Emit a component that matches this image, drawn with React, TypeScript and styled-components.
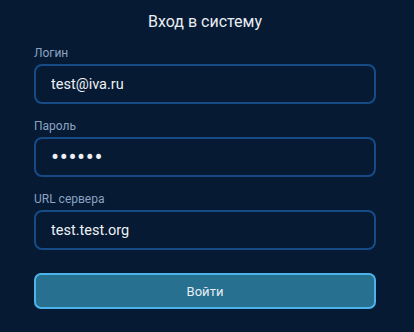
import React, { useState } from "react";
import styled, { createGlobalStyle } from "styled-components";

const GlobalStyle = createGlobalStyle`
  html, body {
    margin: 0;
    padding: 0;
    background-color: #061a33;
    font-family: Roboto, "Noto Sans", "Liberation Sans", sans-serif;
  }
`;

const Page = styled.div`
  width: 414px;
  height: 332px;
  background-color: #061a33;
  box-sizing: border-box;
  padding: 12px 38px 0 34px;
`;

const Title = styled.h1`
  margin: 0;
  font-size: 16px;
  line-height: 20px;
  font-weight: 400;
  color: #e8edf3;
  text-align: center;
`;

const Form = styled.form`
  display: flex;
  flex-direction: column;
  gap: 15px;
  margin-top: 14px;
`;

const Field = styled.label`
  display: flex;
  flex-direction: column;
  gap: 4px;
`;

const Label = styled.span`
  font-size: 12px;
  line-height: 14px;
  color: #8aa3c2;
`;

const Input = styled.input<{ $dots?: boolean }>`
  box-sizing: border-box;
  height: 40px;
  width: 100%;
  padding: 0 15px;
  border: 2px solid #164b86;
  border-radius: 8px;
  background-color: #061a33;
  color: #edf1f5;
  font-family: inherit;
  font-size: ${(p) => (p.$dots ? "24px" : "14.5px")};
  letter-spacing: ${(p) => (p.$dots ? "0.6px" : "0")};
  outline: none;
`;

const Submit = styled.button`
  box-sizing: border-box;
  margin-top: 8px;
  height: 36px;
  width: 100%;
  border: 2px solid #4cb4ea;
  border-radius: 7px;
  background-color: #27708f;
  color: #e6edf3;
  font-family: inherit;
  font-size: 13px;
  cursor: pointer;
`;

const App = () => {
  const [login, setLogin] = useState("test@iva.ru");
  const [password, setPassword] = useState("123456");
  const [server, setServer] = useState("test.test.org");

  return (
    <Page>
      <GlobalStyle />
      <Title>Вход в систему</Title>
      <Form onSubmit={(e) => e.preventDefault()}>
        <Field>
          <Label>Логин</Label>
          <Input value={login} onChange={(e) => setLogin(e.target.value)} />
        </Field>
        <Field>
          <Label>Пароль</Label>
          <Input
            $dots
            type="password"
            value={password}
            onChange={(e) => setPassword(e.target.value)}
          />
        </Field>
        <Field>
          <Label>URL сервера</Label>
          <Input value={server} onChange={(e) => setServer(e.target.value)} />
        </Field>
        <Submit type="submit">Войти</Submit>
      </Form>
    </Page>
  );
};

export default App;
